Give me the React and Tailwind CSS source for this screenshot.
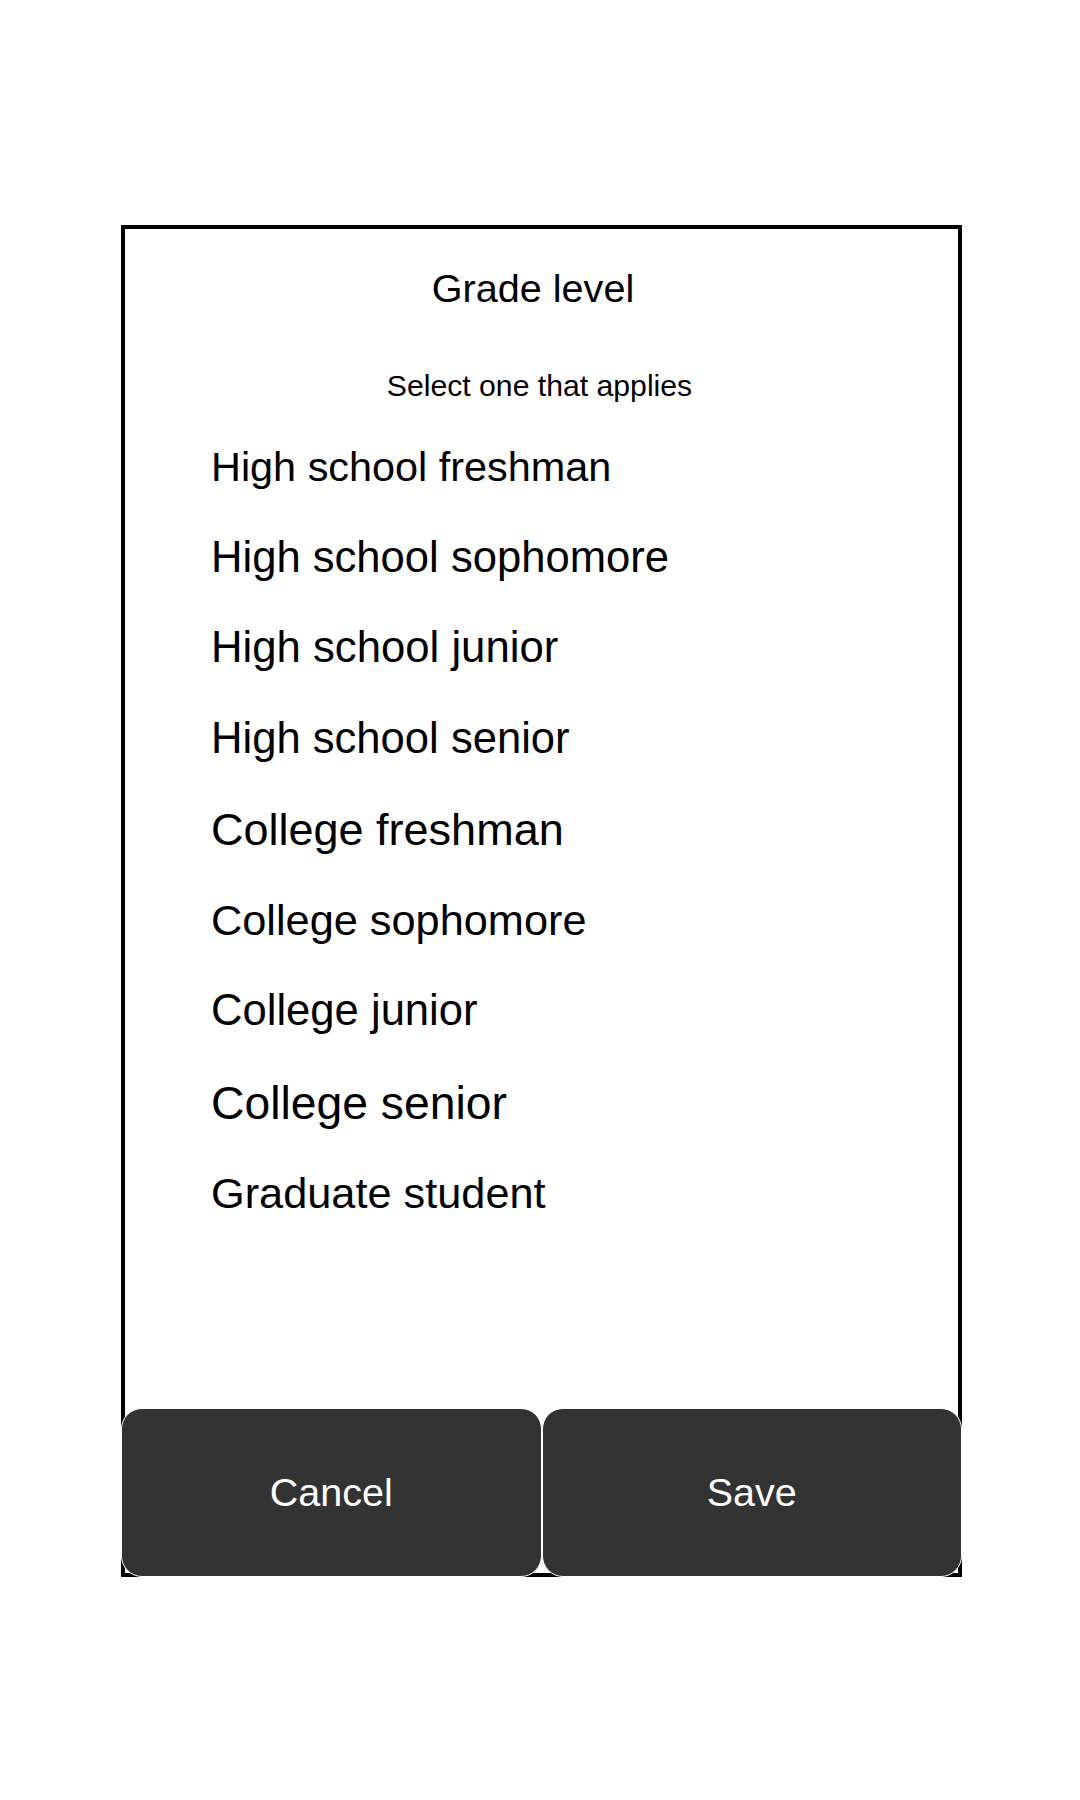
import React from 'react';

const grades = [
  { label: 'High school freshman', size: 'text-[41.4px]', h: 'h-[90px]' },
  { label: 'High school sophomore', size: 'text-[43.6px]', h: 'h-[90px]' },
  { label: 'High school junior', size: 'text-[43.7px]', h: 'h-[91px]' },
  { label: 'High school senior', size: 'text-[43.6px]', h: 'h-[92px]' },
  { label: 'College freshman', size: 'text-[45px]', h: 'h-[90px]' },
  { label: 'College sophomore', size: 'text-[43.3px]', h: 'h-[90px]' },
  { label: 'College junior', size: 'text-[43.6px]', h: 'h-[93px]' },
  { label: 'College senior', size: 'text-[46.3px]', h: 'h-[90px]' },
  { label: 'Graduate student', size: 'text-[43.3px]', h: 'h-[91px]' },
];

export default function App() {
  return (
    <div className="min-h-[1800px] bg-white pt-[225px] font-['Liberation_Sans',Arial,sans-serif] text-black">
      <div className="ml-[121px] flex h-[1352px] w-[841px] flex-col border-4 border-black">
        <h1 className="mt-[35px] h-[48px] pr-[17px] text-center text-[39.6px] leading-[48px]">Grade level</h1>
        <p className="mt-[54px] h-[40px] pr-[4px] text-center text-[30.2px] leading-[40px]">Select one that applies</p>

        <ul className="mt-[16px] pl-[86px]">
          {grades.map(g => (
            <li key={g.label} className={`${g.h} ${g.size} leading-[90px] whitespace-nowrap`}>
              {g.label}
            </li>
          ))}
        </ul>

        <div className="-mx-1 -mb-1 mt-auto flex">
          <button className="h-[169px] flex-1 rounded-[21px] border border-white bg-[#333333] text-[39.5px] text-white">
            Cancel
          </button>
          <button className="h-[169px] flex-1 rounded-[21px] border border-white bg-[#333333] text-[39.5px] text-white">
            Save
          </button>
        </div>
      </div>
    </div>
  );
}
